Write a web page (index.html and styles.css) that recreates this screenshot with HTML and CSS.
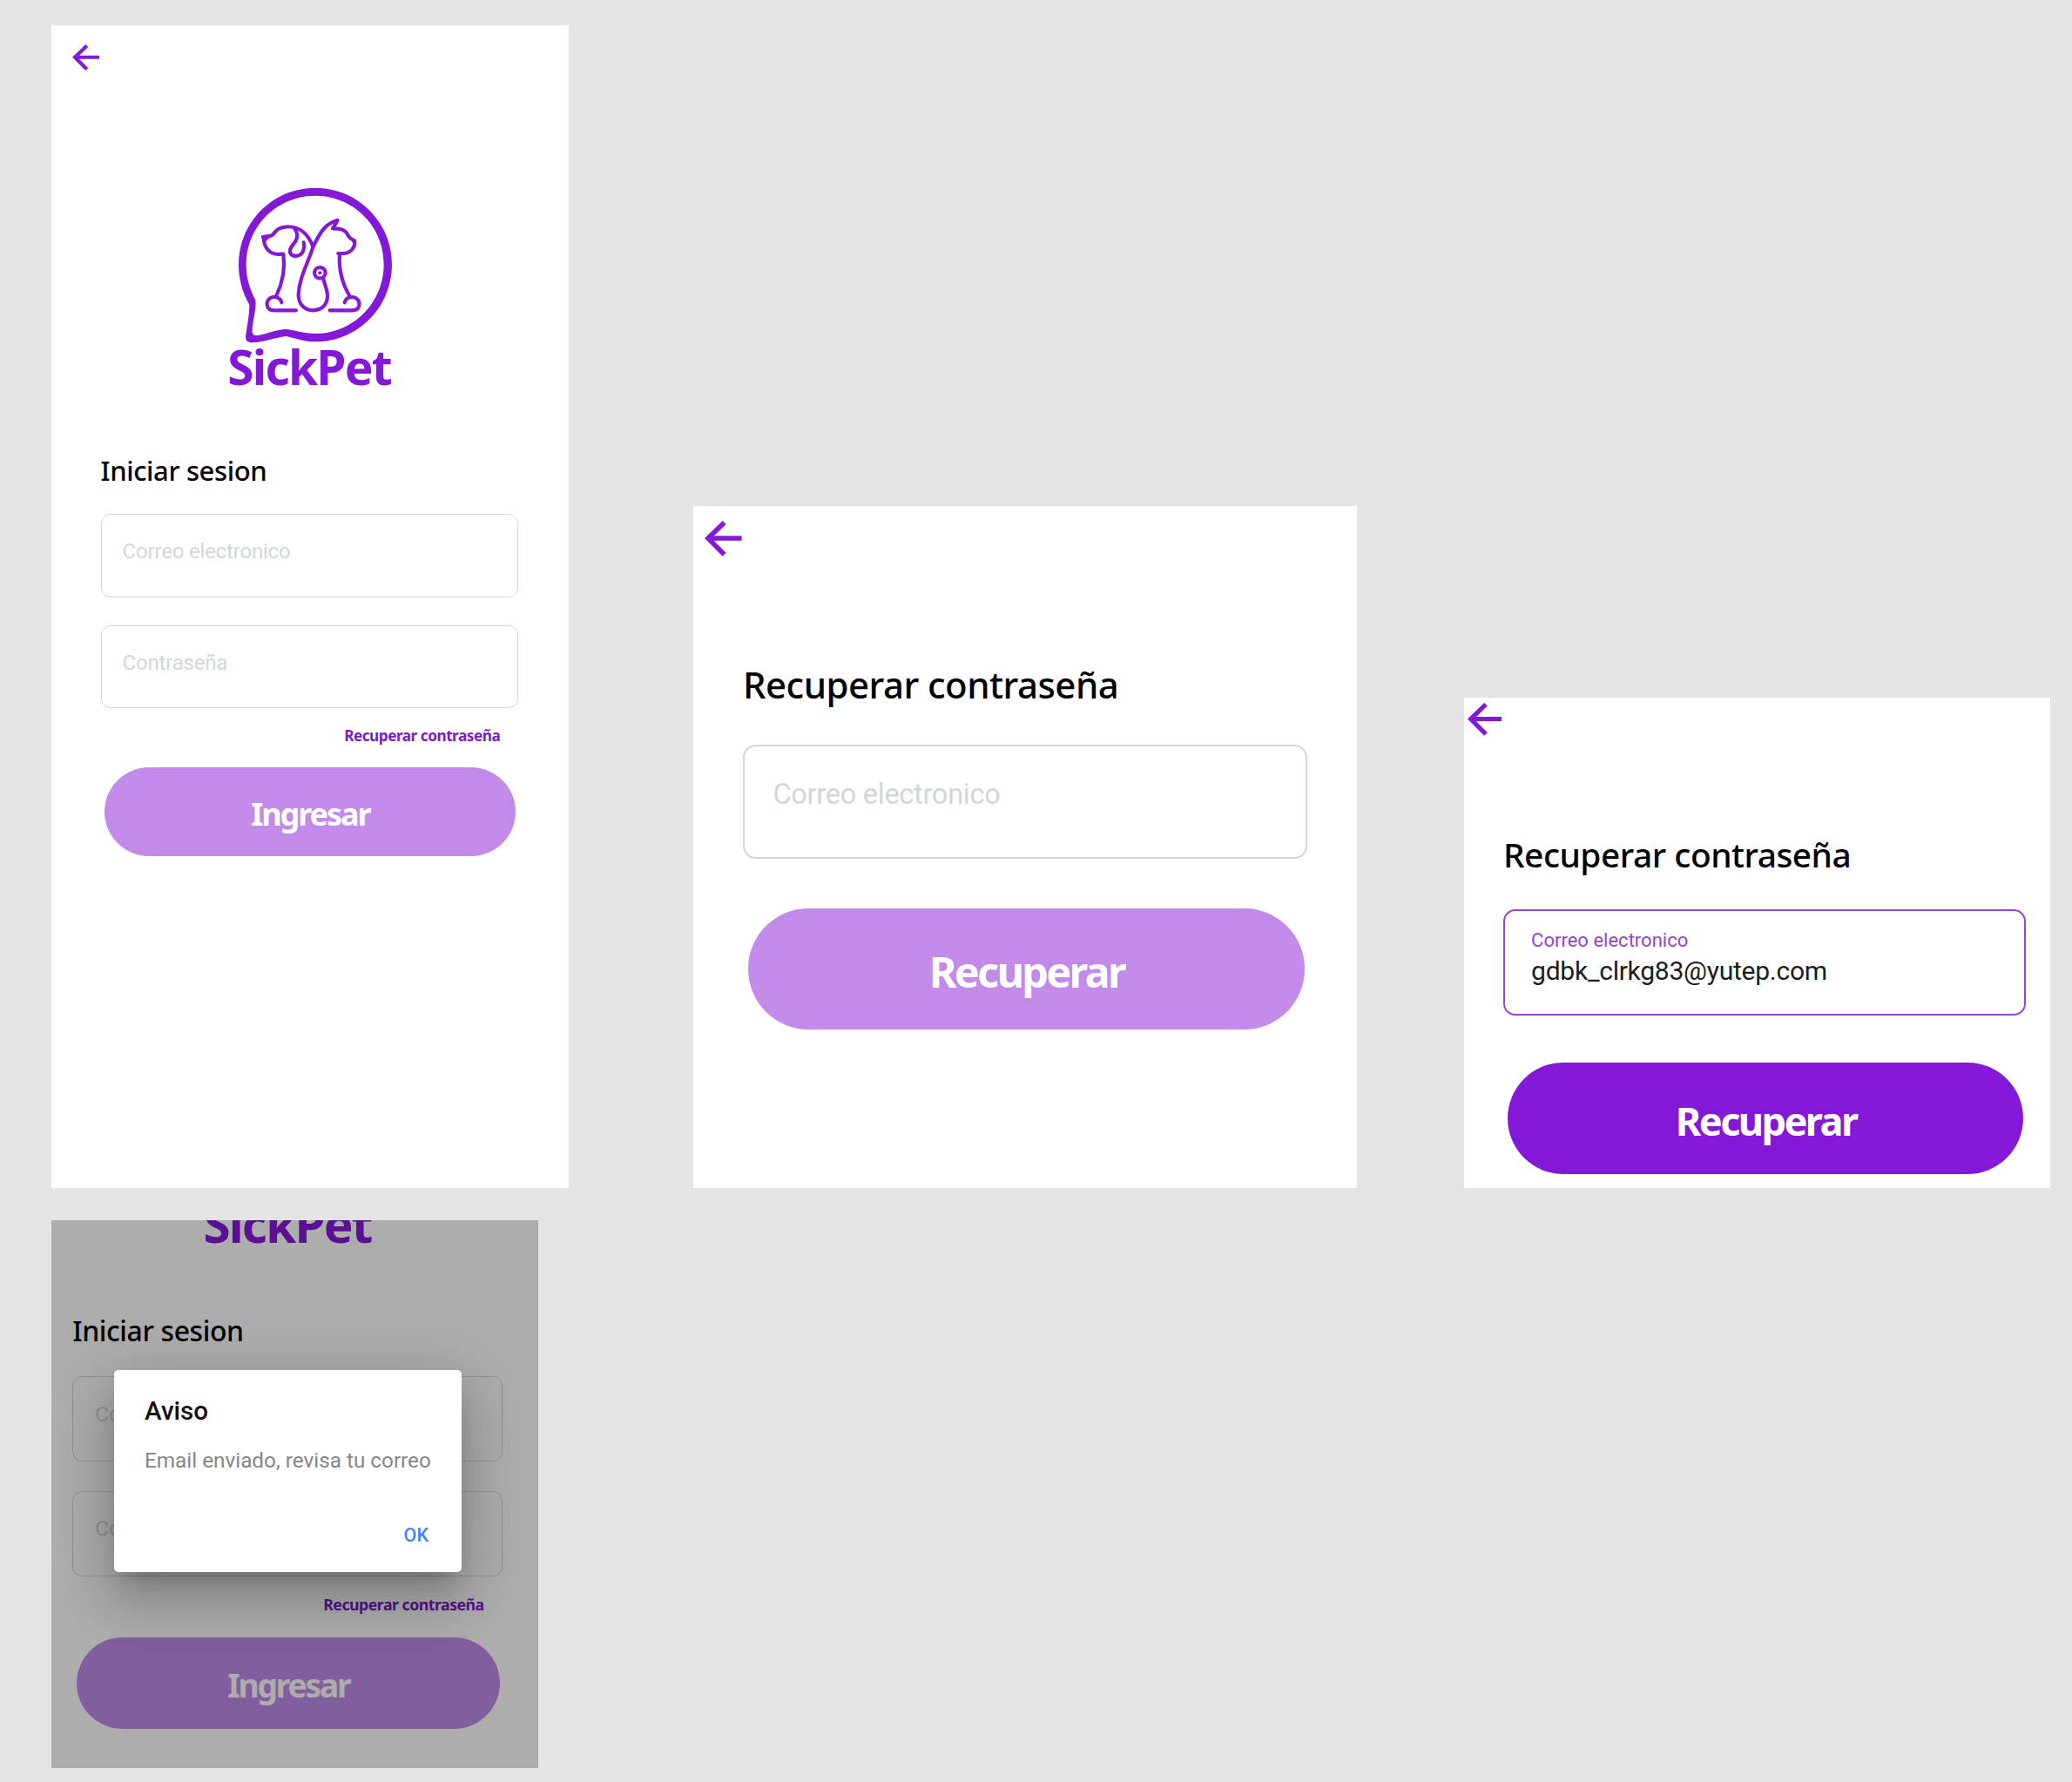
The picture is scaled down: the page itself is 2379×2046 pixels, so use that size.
FILE: index.html
```html
<!DOCTYPE html>
<html lang="es">
<head>
<meta charset="utf-8">
<title>SickPet</title>
<link rel="stylesheet" href="styles.css">
</head>
<body>
<main class="board">
  <div class="row">
    <section class="screen screen-login">
      <svg class="back" viewBox="0 0 32 30"><path d="M32 14.8H3M17 1.2L3 14.8L17 28.8"/></svg>
      <svg class="logo" viewBox="90 40 550 550">
        <path class="bubble" fill-rule="evenodd" d="M366 48C512 48 630 166 630 312C630 460 512 578 366 578C325 578 300 566 265 559C230 563 190 580 148 581C130 581 124 572 127 553C132 515 140 480 139 450C115 408 102 362 102 312C102 166 220 48 366 48ZM366 75C235 75 128 180 128 312C128 358 140 395 160 435C164 470 148 510 149 545C151 560 165 558 180 554C212 547 235 535 265 535C300 538 325 550 366 550C497 550 602 443 602 312C602 180 497 75 366 75Z"/>
        <g class="line">
          <path d="M186 217L214 213C228 208 226 184 268 182C310 180 340 205 358 250"/>
          <path d="M188 222C190 250 205 277 238 277C248 277 252 274 256 276C262 320 258 365 232 420"/>
          <path d="M294 188C306 203 306 218 298 232C285 250 276 258 279 270C284 288 312 286 322 270C330 255 328 245 326 236"/>
          <path d="M250 443C248 430 235 423 222 424C205 426 198 440 200 452C202 465 212 470 225 470H300"/>
          <path d="M442 160C400 170 380 205 357 255C340 310 310 360 308 415C308 450 330 470 358 470C390 470 410 448 408 415C406 395 398 380 394 362"/>
          <path d="M442 160C440 168 432 178 426 188C450 188 470 190 480 214C486 224 494 226 501 230C506 255 485 275 460 274H445"/>
          <path d="M450 276C446 330 460 380 485 422"/>
          <path d="M467 443C470 430 480 424 493 424C512 426 520 440 517 454C514 466 505 470 493 470H416"/>
          <circle cx="382" cy="341" r="19"/>
        </g>
        <path class="bubble" d="M181 212L218 211L190 238ZM490 220L507 228L504 250Q494 244 490 220Z"/>
        <circle class="bubble" cx="382" cy="341" r="6"/>
      </svg>
      <div class="brand">SickPet</div>
      <h1 class="title">Iniciar sesion</h1>
      <div class="fields">
        <div class="field"><span>Correo electronico</span></div>
        <div class="field"><span>Contraseña</span></div>
      </div>
      <a class="link">Recuperar contraseña</a>
      <button class="btn btn-off"><span>Ingresar</span></button>
    </section>

    <section class="screen screen-recover">
      <svg class="back" viewBox="0 0 32 30"><path d="M32 14.8H3M17 1.2L3 14.8L17 28.8"/></svg>
      <h1 class="title">Recuperar contraseña</h1>
      <div class="fields">
        <div class="field"><span>Correo electronico</span></div>
      </div>
      <button class="btn btn-off"><span>Recuperar</span></button>
    </section>

    <section class="screen screen-filled">
      <svg class="back" viewBox="0 0 32 30"><path d="M32 14.8H3M17 1.2L3 14.8L17 28.8"/></svg>
      <h1 class="title">Recuperar contraseña</h1>
      <div class="fields">
        <div class="field field-on">
          <div class="label">Correo electronico</div>
          <div class="value">gdbk_clrkg83@yutep.com</div>
        </div>
      </div>
      <button class="btn"><span>Recuperar</span></button>
    </section>
  </div>

  <section class="screen screen-notice">
    <div class="brand">SickPet</div>
    <h1 class="title">Iniciar sesion</h1>
    <div class="fields">
      <div class="field"><span>Correo electronico</span></div>
      <div class="field"><span>Contraseña</span></div>
    </div>
    <a class="link">Recuperar contraseña</a>
    <button class="btn btn-off"><span>Ingresar</span></button>
    <div class="scrim"></div>
    <div class="dialog">
      <h2 class="dialog-title">Aviso</h2>
      <p class="dialog-text">Email enviado, revisa tu correo</p>
      <div class="dialog-action">OK</div>
    </div>
  </section>
</main>
</body>
</html>
```
FILE: styles.css
```css
* {
  box-sizing: border-box;
}

body {
  margin: 0;
  background: #e5e5e5;
  font-family: "Noto Sans", "Open Sans", sans-serif;
}

h1,
h2,
p {
  margin: 0;
}

.board {
  width: 2379px;
  height: 2046px;
  padding: 29px 0 0 59px;
  overflow: hidden;
}

.row {
  display: flex;
  align-items: flex-end;
}

/* Each screen sets its own font-size; everything inside scales in em. */
.screen {
  display: flex;
  flex-direction: column;
  flex: none;
  position: relative;
  overflow: hidden;
  background: #fff;
  white-space: nowrap;
}

.screen-login {
  width: 594px;
  height: 1335px;
  padding: 21.7px 58.5px 0 56.6px;
  font-size: 10px;
}

.screen-recover {
  width: 762px;
  height: 783px;
  margin-left: 143px;
  padding: 17px 57px 0;
  font-size: 13.53px;
}

.screen-filled {
  width: 673px;
  height: 563px;
  margin-left: 123px;
  padding: 6px 28px 0 45px;
  font-size: 12.526px;
}

.screen-notice {
  width: 559px;
  height: 629px;
  margin-top: 37px;
  padding: 0 41.4px 0 24.3px;
  font-size: 10.3px;
}

.back {
  flex: none;
  width: 3.15em;
  height: 3em;
  fill: none;
  stroke: #8418d8;
  stroke-width: 4.2;
}

.screen-login .back {
  margin-left: -33px;
}

.screen-recover .back {
  margin-left: -44px;
}

.screen-filled .back {
  margin-left: -41.2px;
}

.logo {
  flex: none;
  width: 183.3px;
  height: 183.3px;
  margin: 132.6px 0 0 154.4px;
}

.bubble {
  fill: #8418d8;
}

.line {
  fill: none;
  stroke: #8418d8;
  stroke-width: 12.5;
  stroke-linecap: round;
  stroke-linejoin: round;
}

.brand {
  margin-top: 0.7px;
  text-align: center;
  font-size: 5.5em;
  line-height: 0.8727;
  font-weight: 700;
  letter-spacing: -0.033em;
  color: #8418d8;
}

.screen-notice .brand {
  margin-top: -19.6px;
}

.title {
  margin-top: 2.397em;
  font-size: 3.1em;
  line-height: 1.2903;
  font-weight: 500;
  letter-spacing: -0.012em;
  color: #000;
}

.screen-recover .title {
  margin-top: 120.5px;
}

.screen-filled .title {
  margin-top: 111.5px;
}

.fields {
  display: flex;
  flex-direction: column;
  gap: 3.23em;
  margin-top: 3.06em;
}

.field {
  height: 9.55em;
  padding: 2.77em 2.4em 0;
  border: 0.17em solid #d1d7db;
  border-radius: 1.1em;
  font-family: Roboto, sans-serif;
  color: #d0d7dc;
}

.field > span {
  display: block;
  width: max-content;
  font-size: 2.4em;
  line-height: 1.1667;
  letter-spacing: -0.008em;
}

.screen-recover .field,
.screen-filled .field {
  height: 9.7em;
}

.field-on {
  padding-top: 1.6em;
  border-color: #9444da;
}

.label {
  font-size: 1.76em;
  line-height: 1.2;
  color: #9443d6;
}

.value {
  margin-top: 0.14em;
  font-size: 2.4em;
  line-height: 1.2;
  letter-spacing: -0.009em;
  color: #1c1c1c;
}

.link {
  margin: 1.15em 1.18em 0 0;
  text-align: right;
  font-size: 1.72em;
  line-height: 1.3953;
  font-weight: 700;
  letter-spacing: -0.028em;
  color: #7a1cc9;
}

.btn {
  flex: none;
  height: 10.24em;
  margin: 2.39em 0.25em 0 0.42em;
  padding: 2.96em 0 0 0.1em;
  display: flex;
  align-items: flex-start;
  justify-content: center;
  border: 0;
  border-radius: 5.12em;
  background: #8418d8;
  color: #fff;
  font-family: inherit;
  font-size: 1em;
}

.btn > span {
  font-size: 3.6em;
  line-height: 1.3333;
  font-weight: 700;
  letter-spacing: -0.057em;
}

.btn-off {
  background: #c28bea;
}

.screen-recover .btn {
  margin-top: 57.6px;
}

.screen-filled .btn {
  margin-top: 54px;
}

.scrim {
  position: absolute;
  inset: 0;
  background: rgba(0, 0, 0, 0.32);
}

.dialog {
  position: absolute;
  left: 72px;
  top: 172px;
  width: 399px;
  height: 232.3px;
  padding: 27px 35px 0;
  border-radius: 5px;
  background: #fff;
  box-shadow: 0 16px 22px -10px rgba(0, 0, 0, 0.2), 0 36px 57px 4px rgba(0, 0, 0, 0.14), 0 13px 69px 12px rgba(0, 0, 0, 0.12);
  font-family: Roboto, sans-serif;
}

.dialog-title {
  font-size: 29.6px;
  line-height: 40px;
  font-weight: 500;
  color: #111;
}

.dialog-text {
  margin-top: 21px;
  font-size: 24.3px;
  line-height: 32px;
  color: #868686;
}

.dialog-action {
  margin: 54px 3px 0 0;
  text-align: right;
  font-size: 21.5px;
  line-height: 32px;
  font-weight: 500;
  color: #3f83f8;
}
```
